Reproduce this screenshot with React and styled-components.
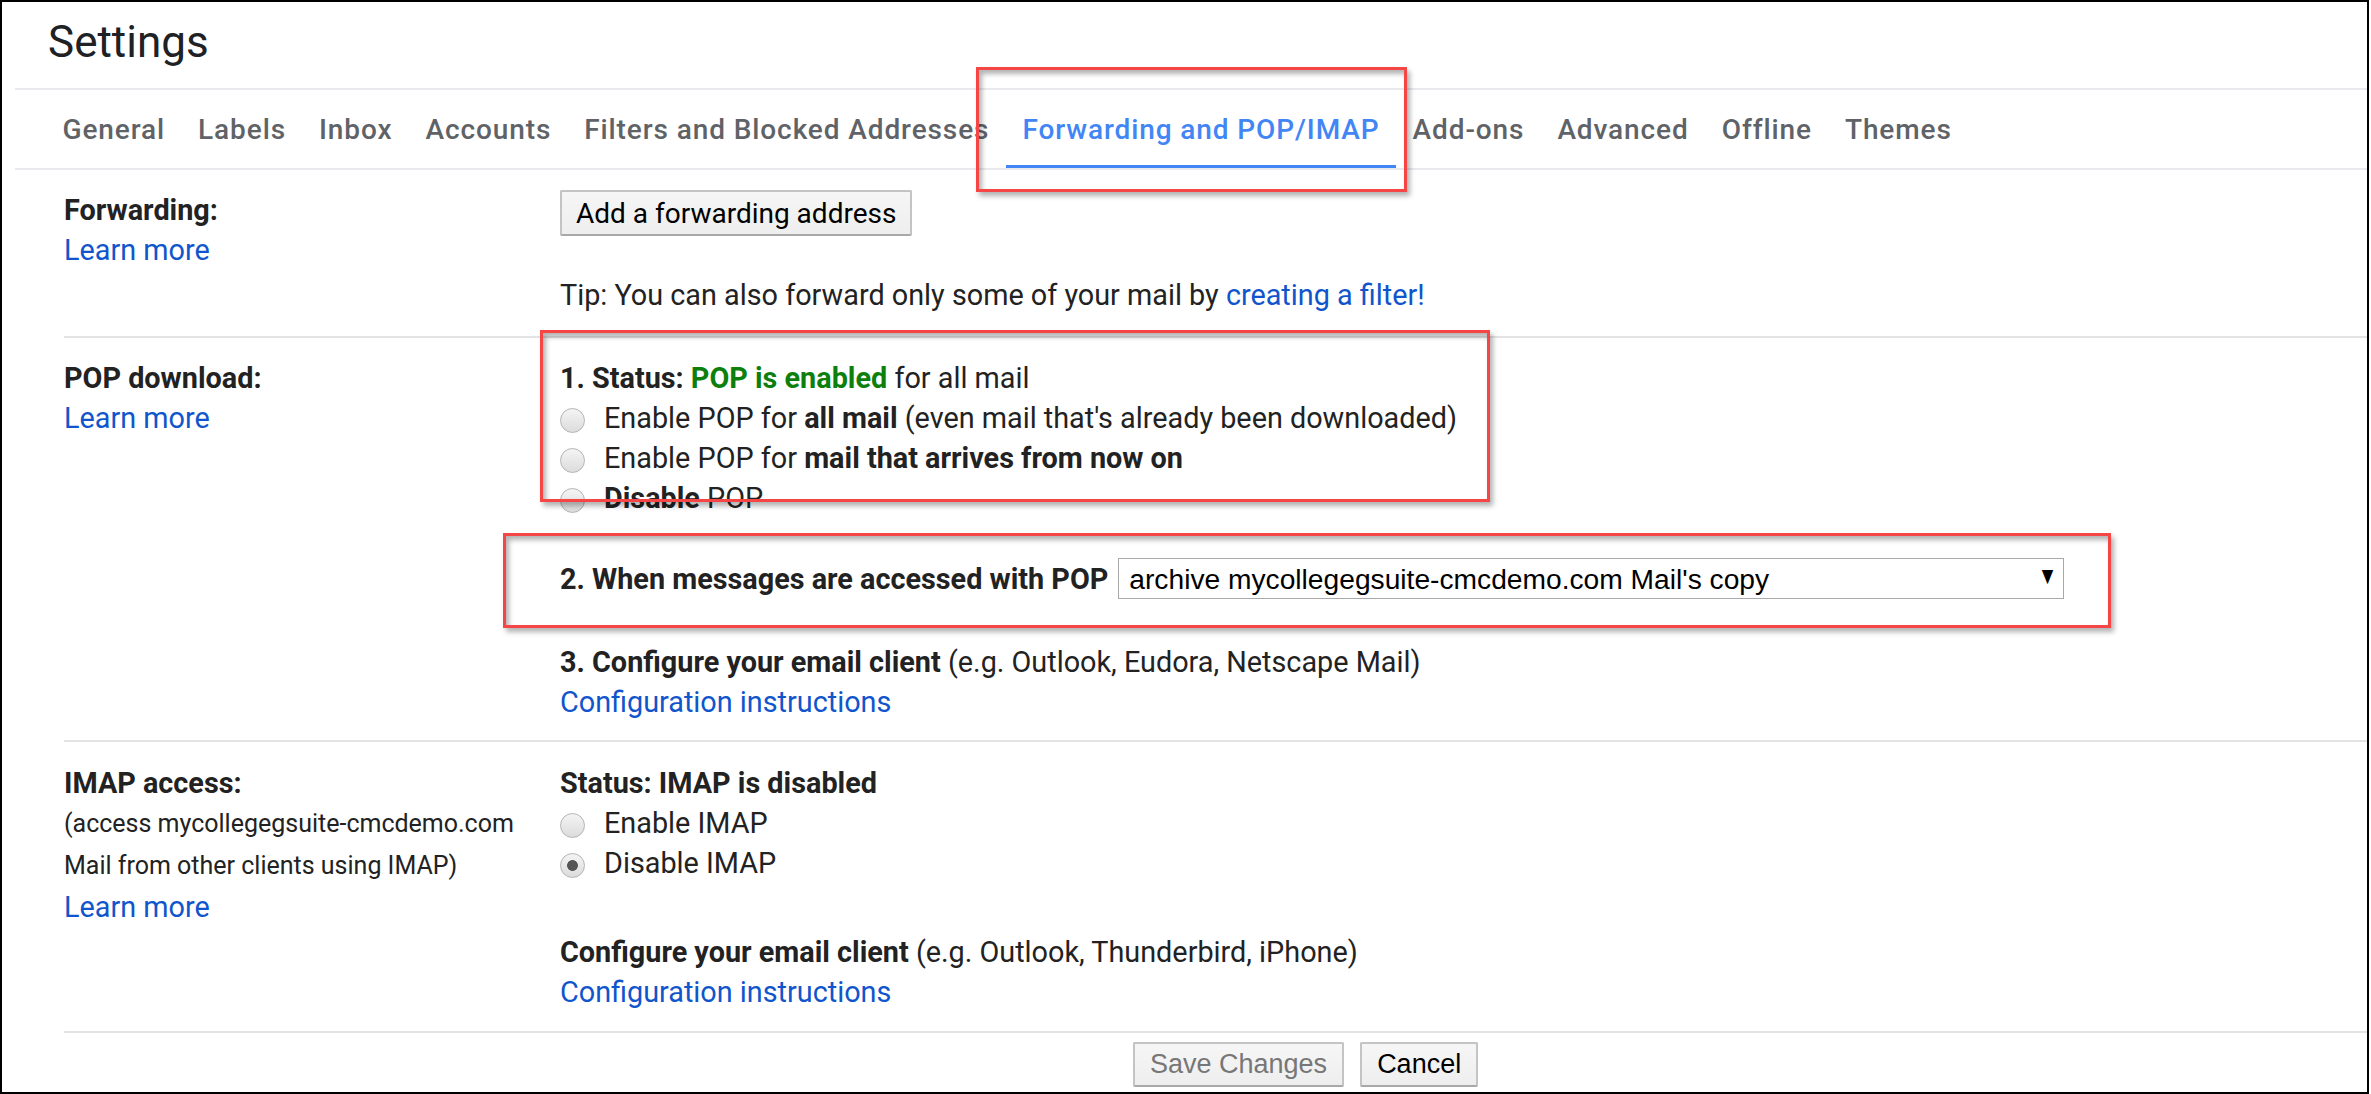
import React from 'react'
import styled, { createGlobalStyle } from 'styled-components'

const GlobalStyle = createGlobalStyle`
  html, body {
    margin: 0;
    padding: 0;
    background: #fff;
  }
  body {
    font-family: Roboto, "Noto Sans", Arial, sans-serif;
    color: #222;
  }
`;

const Frame = styled.div`
  position: relative;
  box-sizing: border-box;
  width: 2369px;
  height: 1094px;
  border: 2px solid #000;
  background: #fff;
  overflow: hidden;
`;

const Header = styled.div`
  height: 86px;
  box-sizing: border-box;
  padding: 18px 0 0 46px;
`;

const Title = styled.h1`
  margin: 0;
  font-family: Roboto, sans-serif;
  font-weight: 400;
  font-size: 44px;
  line-height: 44px;
  color: #202124;
`;

const TabBar = styled.nav`
  display: flex;
  margin-left: 13px;
  padding-left: 31px;
  border-top: 2px solid #e8eaed;
  border-bottom: 2px solid #e8eaed;
`;

const Tab = styled.div`
  box-sizing: border-box;
  height: 78px;
  padding: 3px 16.5px 0;
  display: flex;
  align-items: center;
  font-size: 28px;
  font-weight: 500;
  letter-spacing: 0.9px;
  white-space: nowrap;
  color: ${p => (p.$active ? '#4285f4' : '#5f6368')};
  border-bottom: 3px solid ${p => (p.$active ? '#4285f4' : 'transparent')};
`;

const Section = styled.section`
  display: grid;
  grid-template-columns: 496px 1fr;
  margin-left: 62px;
  padding: ${p => p.$pad || '20px 0 20px'};
  border-top: ${p => (p.$first ? 'none' : '2px solid #e3e3e3')};
  font-size: 28.8px;
  line-height: 40px;
`;

const LabelCol = styled.div`
  display: flex;
  flex-direction: column;
`;

const Label = styled.div`
  font-weight: 700;
`;

const Small = styled.div`
  font-size: 25px;
  line-height: 42px;
  white-space: nowrap;
`;

const Link = styled.a`
  color: #15c;
  text-decoration: none;
  cursor: pointer;
`;

const Body = styled.div`
  display: flex;
  flex-direction: column;
  align-items: flex-start;
`;

const Line = styled.div`
  margin-top: ${p => p.$gap || 0}px;
  white-space: nowrap;
`;

const Green = styled.span`
  color: #0c7f0c;
  font-weight: 700;
`;

const Button = styled.button`
  box-sizing: border-box;
  height: ${p => p.$h || 46}px;
  padding: 0 ${p => p.$px || 14}px;
  font-family: ${p => (p.$arial ? '"Liberation Sans", Arial, sans-serif' : 'Roboto, sans-serif')};
  font-size: ${p => p.$fs || 28}px;
  color: ${p => (p.$disabled ? '#777' : '#000')};
  background: linear-gradient(#f6f6f6, #eeeeee);
  border: 2px solid #c4c4c4;
  border-bottom-color: #a8a8a8;
  border-radius: 2px;
  cursor: default;
`;

const RadioRow = styled.label`
  display: flex;
  align-items: center;
  gap: 19px;
  white-space: nowrap;
`;

const Radio = styled.input.attrs({ type: 'radio', readOnly: true })`
  appearance: none;
  box-sizing: border-box;
  margin: 4px 0 0 0;
  width: 25px;
  height: 25px;
  border-radius: 50%;
  border: 1.5px solid #b4b4b4;
  background: ${p =>
    p.checked
      ? 'radial-gradient(circle, #555 0 5px, transparent 5.8px), linear-gradient(#f4f4f4, #dcdcdc)'
      : 'linear-gradient(#f4f4f4, #dcdcdc)'};
`;

const SelectRow = styled.div`
  display: flex;
  align-items: center;
  gap: 10px;
  margin-top: 40px;
  white-space: nowrap;
`;

const SelectBox = styled.div`
  box-sizing: border-box;
  width: 946px;
  height: 41px;
  display: flex;
  align-items: center;
  justify-content: space-between;
  padding: 0 10px 0 10px;
  border: 1.5px solid #a9a9a9;
  background: #fff;
  font-family: "Liberation Sans", Arial, sans-serif;
  font-size: 28.2px;
  color: #000;
`;

const Arrow = styled.span`
  font-family: "DejaVu Sans", sans-serif;
  font-size: 15px;
  line-height: 1;
  margin-top: -4px;
  transform: scaleY(1.25);
`;

const Footer = styled.div`
  margin-left: 62px;
  border-top: 2px solid #e3e3e3;
  padding: 9px 0 0 1069px;
  display: flex;
  gap: 16px;
`;

const Callout = styled.div`
  position: absolute;
  box-sizing: border-box;
  left: ${p => p.$x}px;
  top: ${p => p.$y}px;
  width: ${p => p.$w}px;
  height: ${p => p.$h}px;
  border: 3px solid #f64545;
  box-shadow: 3px 4px 5px rgba(0, 0, 0, 0.3), inset 3px 4px 5px rgba(0, 0, 0, 0.3);
  pointer-events: none;
`;

const tabs = [
  'General',
  'Labels',
  'Inbox',
  'Accounts',
  'Filters and Blocked Addresses',
  'Forwarding and POP/IMAP',
  'Add-ons',
  'Advanced',
  'Offline',
  'Themes',
];

const App = () => {
  return (
    <>
      <GlobalStyle />
      <Frame>
        <Header>
          <Title>Settings</Title>
        </Header>
        <TabBar>
          {tabs.map(t => (
            <Tab key={t} $active={t === 'Forwarding and POP/IMAP'}>{t}</Tab>
          ))}
        </TabBar>

        <Section $first $pad="20px 0 21px">
          <LabelCol>
            <Label>Forwarding:</Label>
            <Link>Learn more</Link>
          </LabelCol>
          <Body>
            <Button>Add a forwarding address</Button>
            <Line $gap={39}>
              Tip: You can also forward only some of your mail by <Link>creating a filter!</Link>
            </Line>
          </Body>
        </Section>

        <Section $pad="20px 0 18px">
          <LabelCol>
            <Label>POP download:</Label>
            <Link>Learn more</Link>
          </LabelCol>
          <Body>
            <Line>
              <b>1. Status: </b><Green>POP is enabled</Green> for all mail
            </Line>
            <RadioRow>
              <Radio name="pop" />
              <span>Enable POP for <b>all mail</b> (even mail that's already been downloaded)</span>
            </RadioRow>
            <RadioRow>
              <Radio name="pop" />
              <span>Enable POP for <b>mail that arrives from now on</b></span>
            </RadioRow>
            <RadioRow>
              <Radio name="pop" />
              <span><b>Disable</b> POP</span>
            </RadioRow>
            <SelectRow>
              <b>2. When messages are accessed with POP</b>
              <SelectBox>
                <span>archive mycollegegsuite-cmcdemo.com Mail's copy</span>
                <Arrow>▼</Arrow>
              </SelectBox>
            </SelectRow>
            <Line $gap={43}>
              <b>3. Configure your email client</b> (e.g. Outlook, Eudora, Netscape Mail)
            </Line>
            <Link>Configuration instructions</Link>
          </Body>
        </Section>

        <Section $pad="21px 0 19px">
          <LabelCol>
            <Label>IMAP access:</Label>
            <Small>(access mycollegegsuite-cmcdemo.com</Small>
            <Small>Mail from other clients using IMAP)</Small>
            <Link>Learn more</Link>
          </LabelCol>
          <Body>
            <Line><b>Status: IMAP is disabled</b></Line>
            <RadioRow>
              <Radio name="imap" />
              <span>Enable IMAP</span>
            </RadioRow>
            <RadioRow>
              <Radio name="imap" checked />
              <span>Disable IMAP</span>
            </RadioRow>
            <Line $gap={49}>
              <b>Configure your email client</b> (e.g. Outlook, Thunderbird, iPhone)
            </Line>
            <Link>Configuration instructions</Link>
          </Body>
        </Section>

        <Footer>
          <Button $arial $disabled $h={45} $px={15} $fs={27}>Save Changes</Button>
          <Button $arial $h={45} $px={15} $fs={27}>Cancel</Button>
        </Footer>

        <Callout $x={974} $y={65} $w={431} $h={125} />
        <Callout $x={538} $y={328} $w={950} $h={172} />
        <Callout $x={501} $y={531} $w={1608} $h={95} />
      </Frame>
    </>
  )
}

export default App
